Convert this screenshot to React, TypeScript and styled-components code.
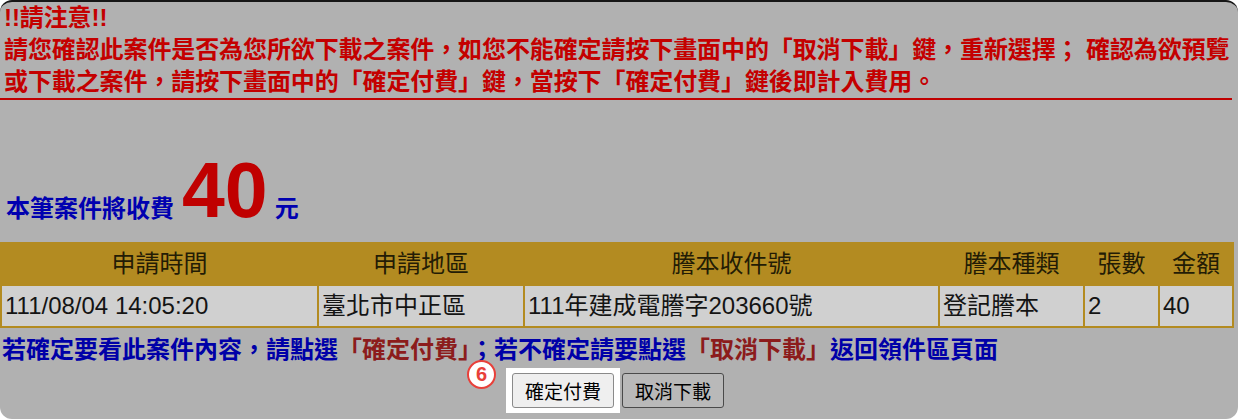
import React from 'react';
import styled, { createGlobalStyle } from 'styled-components';

const GlobalStyle = createGlobalStyle`
  html, body {
    margin: 0;
    padding: 0;
    background: #ffffff;
  }
  body {
    font-family: "Liberation Sans", "Noto Sans CJK TC", sans-serif;
  }
`;

const Panel = styled.div`
  position: relative;
  box-sizing: border-box;
  width: 1238px;
  height: 419px;
  background: #b1b1b1;
  border-top: 2px solid #161616;
  border-radius: 12px;
  overflow: hidden;
`;

const Notice = styled.div`
  width: 1228px;
  padding-left: 4px;
  border-bottom: 2px solid #c00000;
  color: #c40000;
  font-size: 24px;
  font-weight: 700;
  line-height: 32px;
  letter-spacing: -0.1px;
`;

const FeeLine = styled.div`
  display: flex;
  align-items: baseline;
  margin-top: 52px;
  padding-left: 6px;
  height: 77px;
`;

const FeeLabel = styled.span<{ $gap?: number }>`
  color: #0000b0;
  font-size: 24px;
  font-weight: 700;
  line-height: 24px;
  margin-left: ${({ $gap }) => $gap ?? 0}px;
`;

const Amount = styled.span`
  color: #c00000;
  font-size: 77px;
  font-weight: 700;
  line-height: 77px;
  margin-left: 8px;
`;

const CaseTable = styled.table`
  margin-top: 13px;
  width: 1234px;
  table-layout: fixed;
  border-collapse: separate;
  border-spacing: 2px;
  background: #b38b21;
  font-size: 24px;
  line-height: 40px;
`;

const HeadCell = styled.th`
  height: 40px;
  padding: 0;
  font-weight: 400;
  color: #231c05;
  text-align: center;
  background: #b38b21;
  white-space: nowrap;
`;

const DataCell = styled.td`
  height: 38px;
  padding: 0 3px;
  color: #141414;
  background: #d0d0d0;
  white-space: nowrap;
`;

const Reminder = styled.div`
  margin-top: 6px;
  padding-left: 2px;
  color: #0000a8;
  font-size: 24px;
  font-weight: 700;
  line-height: 32px;
`;

const Mark = styled.span`
  color: #8c1c1c;
`;

const Actions = styled.div`
  display: flex;
  justify-content: center;
  align-items: center;
  gap: 2px;
  margin-top: 2px;
  padding-right: 8px;
`;

const Spotlight = styled.div`
  position: relative;
  display: flex;
  padding: 5px 6px;
  background: #ffffff;
`;

const StepBadge = styled.span`
  position: absolute;
  left: -39px;
  top: -8px;
  box-sizing: border-box;
  width: 29px;
  height: 29px;
  border-radius: 50%;
  border: 2px solid #e8403a;
  background: #ffffff;
  color: #e8403a;
  font-family: "Liberation Sans", sans-serif;
  font-size: 20px;
  font-weight: 700;
  line-height: 25px;
  text-align: center;
`;

const ActionButton = styled.button<{ $dim?: boolean }>`
  box-sizing: border-box;
  width: 102px;
  height: 35px;
  padding: 0;
  border: 1px solid ${({ $dim }) => ($dim ? '#4a4a4a' : '#8a8a8a')};
  border-radius: 3px;
  background: ${({ $dim }) => ($dim ? '#b9b9b9' : '#efefef')};
  color: #000000;
  font-family: "Noto Sans CJK TC", sans-serif;
  font-size: 19px;
  line-height: 33px;
`;

const headers = ['申請時間', '申請地區', '謄本收件號', '謄本種類', '張數', '金額'];
const widths = [315, 204, 413, 143, 73, 72];
const row = ['111/08/04 14:05:20', '臺北市中正區', '111年建成電謄字203660號', '登記謄本', '2', '40'];

export default function App() {
  return (
    <>
      <GlobalStyle />
      <Panel>
        <Notice>
          !!請注意!!
          <br />
          請您確認此案件是否為您所欲下載之案件，如您不能確定請按下畫面中的「取消下載」鍵，重新選擇； 確認為欲預覽
          <br />
          或下載之案件，請按下畫面中的「確定付費」鍵，當按下「確定付費」鍵後即計入費用。
        </Notice>

        <FeeLine>
          <FeeLabel>本筆案件將收費</FeeLabel>
          <Amount>40</Amount>
          <FeeLabel $gap={7}>元</FeeLabel>
        </FeeLine>

        <CaseTable>
          <colgroup>
            {widths.map((w, i) => (
              <col key={i} style={{ width: w }} />
            ))}
          </colgroup>
          <thead>
            <tr>
              {headers.map((h) => (
                <HeadCell key={h}>{h}</HeadCell>
              ))}
            </tr>
          </thead>
          <tbody>
            <tr>
              {row.map((v, i) => (
                <DataCell key={i}>{v}</DataCell>
              ))}
            </tr>
          </tbody>
        </CaseTable>

        <Reminder>
          若確定要看此案件內容，請點選<Mark>「確定付費」</Mark>；若不確定請要點選<Mark>「取消下載」</Mark>返回領件區頁面
        </Reminder>

        <Actions>
          <Spotlight>
            <StepBadge>6</StepBadge>
            <ActionButton>確定付費</ActionButton>
          </Spotlight>
          <ActionButton $dim>取消下載</ActionButton>
        </Actions>
      </Panel>
    </>
  );
}
